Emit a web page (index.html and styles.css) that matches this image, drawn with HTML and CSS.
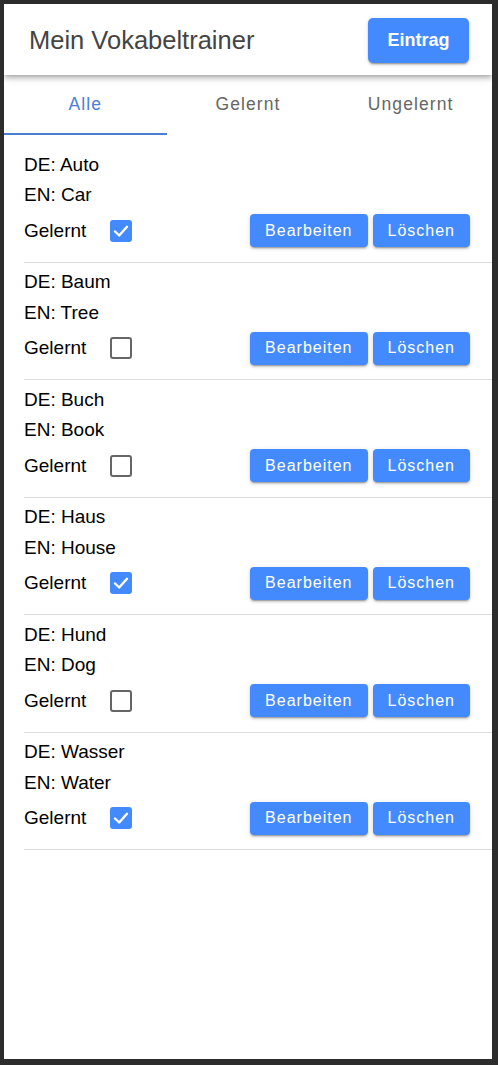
FILE: index.html
```html
<!DOCTYPE html>
<html lang="de">
<head>
<meta charset="utf-8">
<title>Mein Vokabeltrainer</title>
<link rel="stylesheet" href="styles.css">
</head>
<body>
<div class="app">
  <header class="bar">
    <div class="title">Mein Vokabeltrainer</div>
    <button class="btn btn-main">Eintrag</button>
  </header>
  <nav class="tabs">
    <div class="tab active">Alle</div>
    <div class="tab">Gelernt</div>
    <div class="tab">Ungelernt</div>
  </nav>
  <main class="list">
    <div class="item">
      <div class="line">DE: Auto</div>
      <div class="line">EN: Car</div>
      <div class="row">
        <span class="label">Gelernt</span>
        <span class="cb checked"><svg viewBox="0 0 22 22" width="22" height="22"><polyline points="5,11.5 9.2,15.5 17,6.8" fill="none" stroke="#fff" stroke-width="2.4" stroke-linecap="round" stroke-linejoin="round"/></svg></span>
        <span class="actions"><button class="btn btn-sm">Bearbeiten</button><button class="btn btn-sm">Löschen</button></span>
      </div>
    </div>
    <div class="item">
      <div class="line">DE: Baum</div>
      <div class="line">EN: Tree</div>
      <div class="row">
        <span class="label">Gelernt</span>
        <span class="cb"></span>
        <span class="actions"><button class="btn btn-sm">Bearbeiten</button><button class="btn btn-sm">Löschen</button></span>
      </div>
    </div>
    <div class="item">
      <div class="line">DE: Buch</div>
      <div class="line">EN: Book</div>
      <div class="row">
        <span class="label">Gelernt</span>
        <span class="cb"></span>
        <span class="actions"><button class="btn btn-sm">Bearbeiten</button><button class="btn btn-sm">Löschen</button></span>
      </div>
    </div>
    <div class="item">
      <div class="line">DE: Haus</div>
      <div class="line">EN: House</div>
      <div class="row">
        <span class="label">Gelernt</span>
        <span class="cb checked"><svg viewBox="0 0 22 22" width="22" height="22"><polyline points="5,11.5 9.2,15.5 17,6.8" fill="none" stroke="#fff" stroke-width="2.4" stroke-linecap="round" stroke-linejoin="round"/></svg></span>
        <span class="actions"><button class="btn btn-sm">Bearbeiten</button><button class="btn btn-sm">Löschen</button></span>
      </div>
    </div>
    <div class="item">
      <div class="line">DE: Hund</div>
      <div class="line">EN: Dog</div>
      <div class="row">
        <span class="label">Gelernt</span>
        <span class="cb"></span>
        <span class="actions"><button class="btn btn-sm">Bearbeiten</button><button class="btn btn-sm">Löschen</button></span>
      </div>
    </div>
    <div class="item">
      <div class="line">DE: Wasser</div>
      <div class="line">EN: Water</div>
      <div class="row">
        <span class="label">Gelernt</span>
        <span class="cb checked"><svg viewBox="0 0 22 22" width="22" height="22"><polyline points="5,11.5 9.2,15.5 17,6.8" fill="none" stroke="#fff" stroke-width="2.4" stroke-linecap="round" stroke-linejoin="round"/></svg></span>
        <span class="actions"><button class="btn btn-sm">Bearbeiten</button><button class="btn btn-sm">Löschen</button></span>
      </div>
    </div>
  </main>
</div>
</body>
</html>
```

FILE: styles.css
```css
html, body {
  height: 100%;
}
body {
  margin: 0;
  padding: 4px 6px 6px 4px;
  box-sizing: border-box;
  background: #2c2c2c;
  font-family: "Liberation Sans", Arial, sans-serif;
}
.app {
  height: 100%;
  background: #fff;
  overflow: hidden;
}
.bar {
  position: relative;
  z-index: 2;
  height: 71px;
  display: flex;
  align-items: center;
  justify-content: space-between;
  padding: 0 23px 0 25px;
  background: #fff;
  box-shadow: 0 2px 4px -1px rgba(0,0,0,.2), 0 4px 5px 0 rgba(0,0,0,.14), 0 1px 10px 0 rgba(0,0,0,.12);
}
.title {
  font-size: 25.5px;
  color: #444;
  padding-top: 2px;
}
.btn {
  border: none;
  background: #448aff;
  color: #fff;
  font-family: "Liberation Sans", Arial, sans-serif;
  border-radius: 4px;
  cursor: pointer;
  box-shadow: 0 3px 1px -2px rgba(0,0,0,.2), 0 2px 2px 0 rgba(0,0,0,.14), 0 1px 5px 0 rgba(0,0,0,.12);
}
.btn-main {
  height: 45px;
  padding: 0 19.5px;
  font-size: 18px;
  font-weight: bold;
  border-radius: 5px;
  margin-top: 2px;
}
.tabs {
  display: flex;
  height: 60px;
}
.tab {
  flex: 1;
  display: flex;
  align-items: center;
  justify-content: center;
  font-size: 17.5px;
  letter-spacing: 1.1px;
  color: #666;
  border-bottom: 2px solid transparent;
  padding-top: 1px;
}
.tab.active {
  color: #4a80dc;
  border-bottom-color: #4a7ed3;
}
.list {
  padding-top: 10px;
}
.item {
  margin-left: 20px;
  padding: 4.5px 22px 14px 0;
  border-bottom: 1px solid #dcdcdc;
  color: #000;
  font-size: 19px;
}
.line {
  line-height: 30.5px;
}
.row {
  display: flex;
  align-items: center;
  height: 34px;
  margin-top: 3px;
}
.label {
  width: 86px;
}
.cb {
  width: 22px;
  height: 22px;
  box-sizing: border-box;
  border: 2px solid #666;
  border-radius: 3px;
  display: flex;
}
.cb.checked {
  border: none;
  background: #448aff;
}
.cb svg {
  display: block;
}
.actions {
  margin-left: auto;
  display: flex;
  gap: 5px;
}
.btn-sm {
  height: 33px;
  padding: 0 15px;
  font-size: 16px;
  letter-spacing: 1px;
}
```
